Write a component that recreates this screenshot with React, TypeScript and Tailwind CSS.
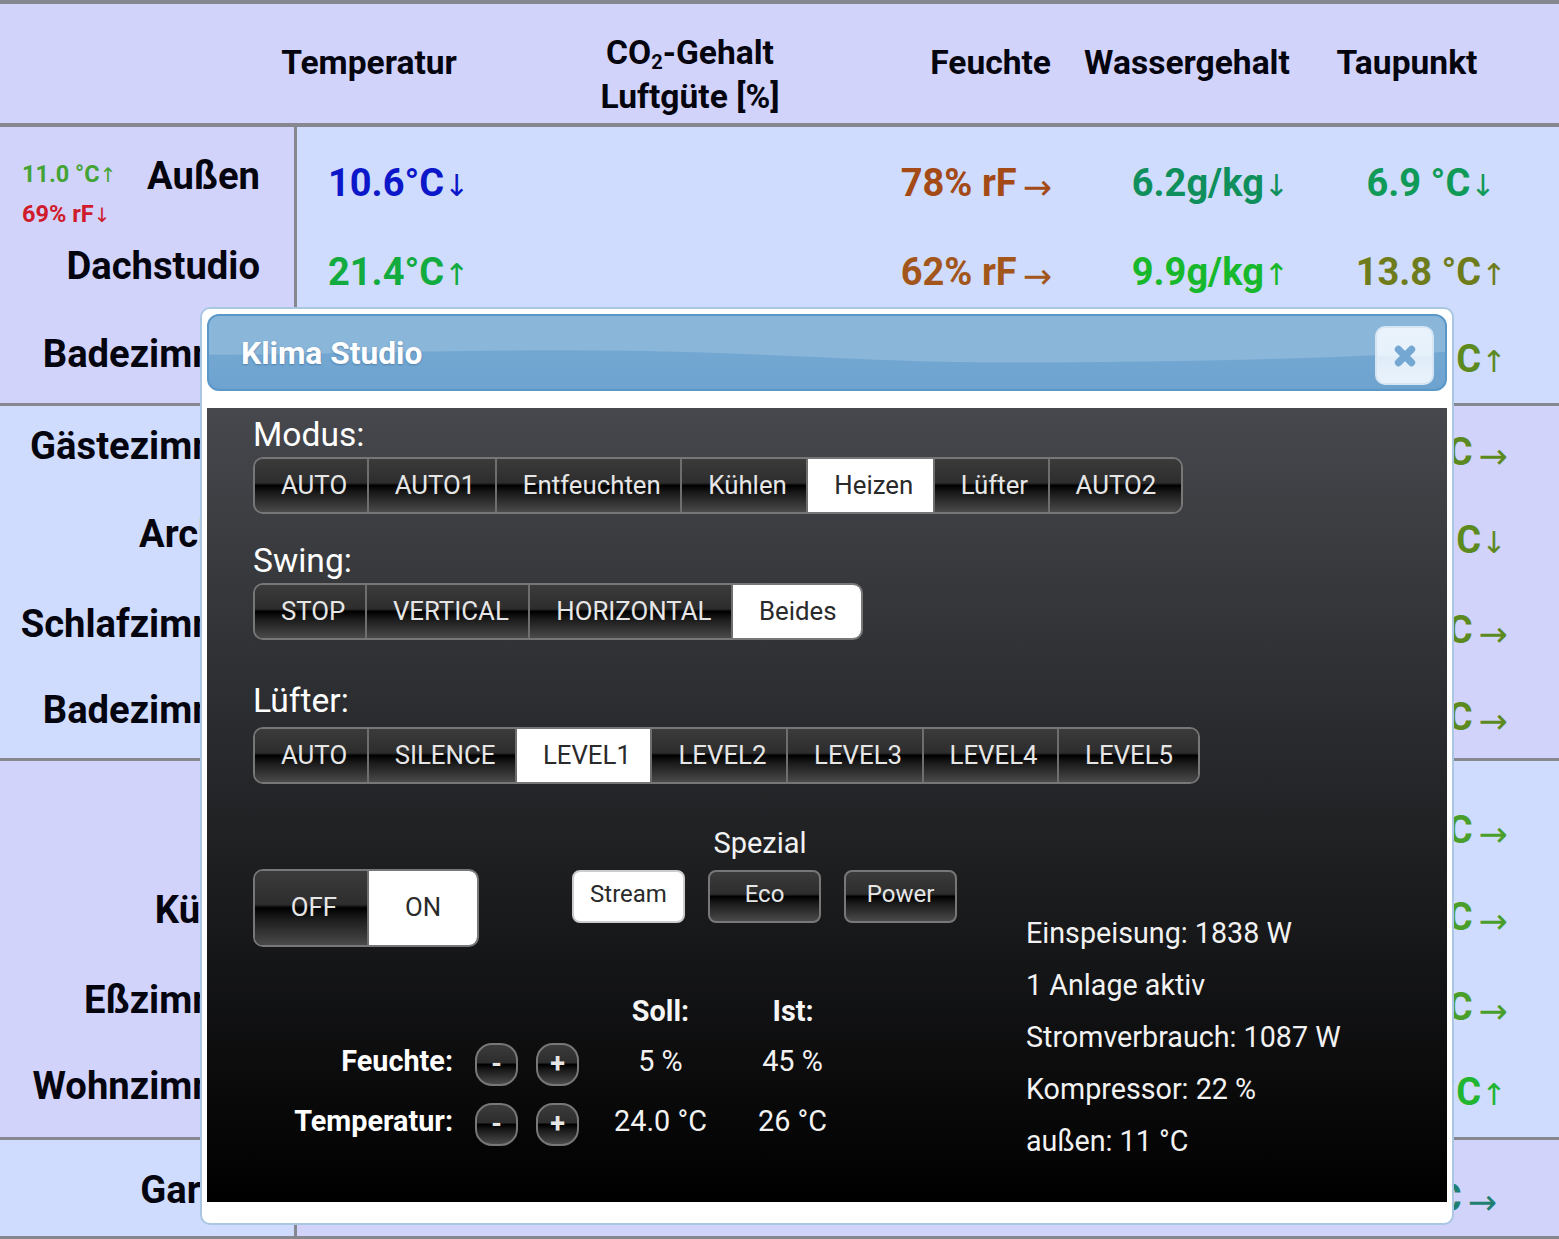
import React from "react";

const F = "font-['Roboto','Noto_Sans','DejaVu_Sans',sans-serif]";
const GLOSS =
  "bg-[linear-gradient(#3b3b3b,#2d2d2d_45%,#000_50%,#1a1a1a_64%,#4a4a4a)] text-[#e6e6e6]";
const ACTIVE = "bg-white text-[#2a2a2a]";

type Val = { t: string; a: string; c: string };

function Value({ v }: { v?: Val }) {
  if (!v) return null;
  return (
    <span className="text-[38px] font-bold leading-[44px] whitespace-nowrap" style={{ color: v.c }}>
      {v.t}
      <span
        className={
          v.a === "→"
            ? "relative top-[3px] text-[35px] font-normal ml-[6px]"
            : "text-[30px] font-normal"
        }
      >
        {v.a}
      </span>
    </span>
  );
}

type RowT = {
  h: number;
  v: number;
  l?: number;
  label?: string;
  shift?: number;
  temp?: Val;
  hum?: Val;
  wat?: Val;
  tau?: Val;
  extra?: boolean;
};

function Row({ r, left, right }: { r: RowT; left: string; right: string }) {
  return (
    <div className={`flex ${r.extra ? "relative z-10" : ""}`} style={{ height: r.h }}>
      <div className={`w-[294px] shrink-0 flex justify-end pr-[34px] relative ${left}`}>
        {r.extra && (
          <div className="mr-auto pl-[22px] pt-[32px] flex flex-col gap-[9px] text-[23.5px] font-bold leading-[30px]">
            <span className="text-[#43a335] whitespace-nowrap">
              11.0 °C<span className="text-[20px] font-normal">↑</span>
            </span>
            <span className="text-[#cf1b2b] whitespace-nowrap">
              69% rF<span className="text-[20px] font-normal">↓</span>
            </span>
          </div>
        )}
        {r.label && (
          <div
            className="text-[38.2px] font-bold leading-[44px] text-[#05050f] whitespace-nowrap"
            style={{ marginTop: (r.l ?? 44) - 22, marginRight: r.shift ?? 0 }}
          >
            {r.label}
          </div>
        )}
      </div>
      <div className="w-[3px] shrink-0 bg-[#87878f]" />
      <div className={`flex-1 flex ${right}`}>
        <div className="w-[263px] pl-[31px] flex" style={{ marginTop: r.v - 22 }}>
          <Value v={r.temp} />
        </div>
        <div className="w-[260px]" />
        <div className="w-[232px] flex justify-end" style={{ marginTop: r.v - 22 }}>
          <Value v={r.hum} />
        </div>
        <div className="w-[237px] flex justify-end" style={{ marginTop: r.v - 22 }}>
          <Value v={r.wat} />
        </div>
        <div
          className={`flex-1 pl-[14px] flex justify-center ${r.tau?.a === "→" ? "pr-[7px]" : ""}`}
          style={{ marginTop: r.v - 22 }}
        >
          <Value v={r.tau} />
        </div>
      </div>
    </div>
  );
}

const OL = "#5c8a1f";
const GR = "#4a9e2a";

const s1: RowT[] = [
  {
    h: 92, v: 56, l: 49, label: "Außen", extra: true,
    temp: { t: "10.6°C", a: "↓", c: "#0b17c8" },
    hum: { t: "78% rF", a: "→", c: "#a34a17" },
    wat: { t: "6.2g/kg", a: "↓", c: "#0f8f5c" },
    tau: { t: "6.9 °C", a: "↓", c: "#0f9a57" },
  },
  {
    h: 90, v: 53, l: 47, label: "Dachstudio",
    temp: { t: "21.4°C", a: "↑", c: "#12ab3f" },
    hum: { t: "62% rF", a: "→", c: "#a3561b" },
    wat: { t: "9.9g/kg", a: "↑", c: "#18b82c" },
    tau: { t: "13.8 °C", a: "↑", c: "#6f7c1c" },
  },
  { h: 94, v: 50, l: 45, label: "Badezimmer", tau: { t: "14.2 °C", a: "↑", c: OL } },
];
const s2: RowT[] = [
  { h: 88, v: 46, l: 40, label: "Gästezimmer", tau: { t: "12.7 °C", a: "→", c: OL } },
  { h: 90, v: 46, l: 40, label: "Archiv", shift: 11, tau: { t: "13.4 °C", a: "↓", c: OL } },
  { h: 88, v: 46, l: 40, label: "Schlafzimmer", tau: { t: "12.1 °C", a: "→", c: OL } },
  { h: 86, v: 45, l: 38, label: "Badezimmer", tau: { t: "12.5 °C", a: "→", c: OL } },
];
const s3: RowT[] = [
  { h: 119, v: 69, tau: { t: "11.8 °C", a: "→", c: GR } },
  { h: 86, v: 37, l: 30, label: "Küche", shift: -2, tau: { t: "11.6 °C", a: "→", c: GR } },
  { h: 86, v: 41, l: 34, label: "Eßzimmer", tau: { t: "11.9 °C", a: "→", c: GR } },
  { h: 85, v: 40, l: 34, label: "Wohnzimmer", tau: { t: "11.5 °C", a: "↑", c: "#22b52f" } },
];
const s4: RowT[] = [{ h: 96, v: 58, l: 50, label: "Garage", shift: -3, tau: { t: "6.6 °C", a: "→", c: "#1f7f70" } }];

const LAV = "bg-[#d2d3fb]";
const BLU = "bg-[#cfdcfd]";

function Section({ rows, left, right }: { rows: RowT[]; left: string; right: string }) {
  return (
    <div className="border-b-[3px] border-[#87878f]">
      {rows.map((r, i) => (
        <Row key={i} r={r} left={left} right={right} />
      ))}
    </div>
  );
}

function Segs({
  items,
  active,
  h = "h-[57px]",
  pads,
}: {
  items: string[];
  active: string;
  h?: string;
  pads?: string[];
}) {
  return (
    <div className={`flex w-fit rounded-[10px] border-2 border-[#777] overflow-hidden ${h}`}>
      {items.map((t, i) => (
        <div
          key={t}
          className={`flex items-center justify-center ${
            pads ? pads[i] : i === items.length - 1 ? "pl-[26px] pr-[25px]" : "pl-[26px] pr-[19.5px]"
          } text-[25.8px] leading-none ${t === active ? ACTIVE : GLOSS} ${
            i > 0 ? "border-l-2 border-[#6e6e6e]" : ""
          }`}
        >
          {t}
        </div>
      ))}
    </div>
  );
}

function Small({ t, on }: { t: string; on?: boolean }) {
  return (
    <div
      className={`w-[113px] h-[53px] rounded-[8px] border-2 flex items-center justify-center pb-[6px] text-[24px] ${
        on ? `${ACTIVE} border-[#ccc]` : `${GLOSS} border-[#777]`
      }`}
    >
      {t}
    </div>
  );
}

function Round({ t }: { t: string }) {
  return (
    <div
      className={`w-[43px] h-[43px] rounded-[17px] border-2 border-[#777] flex items-center justify-center text-[27px] font-bold leading-none ${GLOSS}`}
    >
      {t}
    </div>
  );
}

function Ctl({ label, soll, ist, h }: { label: string; soll: string; ist: string; h: string }) {
  return (
    <div className={`flex items-center text-[28.8px] text-[#f2f2f2] ${h}`}>
      <div className="w-[200px] text-right font-bold text-white pb-[4px]">{label}</div>
      <div className="ml-[22px]"><Round t="-" /></div>
      <div className="ml-[18px]"><Round t="+" /></div>
      <div className="w-[133px] ml-[15px] text-center pb-[4px]">{soll}</div>
      <div className="w-[131px] text-center pb-[4px]">{ist}</div>
    </div>
  );
}

export default function App() {
  return (
    <div className={`${F} relative w-full h-[1239px] overflow-hidden bg-[#d2d3fb]`}>
      <div className={`flex h-[127px] border-t-4 border-b-4 border-[#87878f] ${LAV} text-[33.6px] font-bold text-[#05050f]`}>
        <div className="w-[232px]" />
        <div className="w-[274px] text-center leading-[44px] pt-[37px]">Temperatur</div>
        <div className="w-[368px] text-center leading-[44px] pt-[27px]">
          CO<sub className="text-[20px] leading-none">2</sub>-Gehalt
          <br />
          Luftgüte [%]
        </div>
        <div className="w-[177px] text-right leading-[44px] pt-[37px]">Feuchte</div>
        <div className="ml-[33px] w-[206px] text-center leading-[44px] pt-[37px]">Wassergehalt</div>
        <div className="w-[234px] text-center leading-[44px] pt-[37px]">Taupunkt</div>
      </div>
      <Section rows={s1} left={LAV} right={BLU} />
      <Section rows={s2} left={BLU} right={LAV} />
      <Section rows={s3} left={LAV} right={BLU} />
      <Section rows={s4} left={BLU} right={LAV} />

      <div className="absolute z-20 left-[200px] top-[307px] w-[1254px] h-[918px] bg-white border-2 border-[#a9c7e3] rounded-[10px] p-[5px]">
        <div className="relative h-[77px] rounded-[12px] border-2 border-[#5b97c7] overflow-hidden bg-[linear-gradient(#78acd4,#6ea3d0)] flex items-center">
          <svg className="absolute inset-0 w-full h-full" viewBox="0 0 1240 77" preserveAspectRatio="none">
            <path d="M0 41 C150 40 300 34 440 37 C600 41 680 49 800 49 C950 49 1100 46 1240 38 L1240 0 L0 0 Z" fill="#8ab6d9" />
          </svg>
          <div className="relative ml-[32px] mt-[2px] text-[31.7px] font-bold text-white leading-none [text-shadow:0_1px_2px_rgba(60,100,140,0.6)]">
            Klima Studio
          </div>
          <div className="relative ml-auto mr-[11px] mt-[6px] w-[59px] h-[59px] rounded-[10px] border-2 border-[#d5e5f3] bg-[linear-gradient(#eaf3fc,#e6f1fb_50%,#dfecf8_52%,#eaf3fc)] flex items-center justify-center">
            <svg width="22" height="22" viewBox="0 0 20 20">
              <path d="M4 4 L16 16 M16 4 L4 16" stroke="#74a8d3" strokeWidth="6.5" strokeLinecap="round" />
            </svg>
          </div>
        </div>

        <div className="mt-[17px] h-[794px] pl-[46px] text-white bg-[linear-gradient(#46484d,#000)]">
          <div className="h-[49px] text-[33.6px] leading-[54px]">Modus:</div>
          <Segs items={["AUTO", "AUTO1", "Entfeuchten", "Kühlen", "Heizen", "Lüfter", "AUTO2"]} active="Heizen" />
          <div className="h-[69px] pt-[24px] text-[33.6px] leading-[46px]">Swing:</div>
          <Segs items={["STOP", "VERTICAL", "HORIZONTAL", "Beides"]} active="Beides" />
          <div className="h-[87px] pt-[38px] text-[33.6px] leading-[46px]">Lüfter:</div>
          <Segs items={["AUTO", "SILENCE", "LEVEL1", "LEVEL2", "LEVEL3", "LEVEL4", "LEVEL5"]} active="LEVEL1" />

          <div className="flex">
            <div className="w-[773px]">
              <div className="flex">
                <div className="mt-[85px]">
                  <Segs items={["OFF", "ON"]} active="ON" h="h-[78px]" pads={["w-[112px] pl-[6px]", "w-[110px]"]} />
                </div>
                <div className="ml-[93px] mt-[39px] w-[386px]">
                  <div className="h-[47px] text-[29px] leading-[40px] text-center pr-[10px] text-[#f2f2f2]">Spezial</div>
                  <div className="flex gap-[23px]">
                    <Small t="Stream" on />
                    <Small t="Eco" />
                    <Small t="Power" />
                  </div>
                </div>
              </div>
              <div className="mt-[41px] h-[48px] flex items-center text-[28.8px] font-bold text-[#f5f5f5]">
                <div className="w-[341px]" />
                <div className="w-[133px] text-center">Soll:</div>
                <div className="w-[132px] text-center">Ist:</div>
              </div>
              <Ctl label="Feuchte:" soll="5 %" ist="45 %" h="h-[56px]" />
              <Ctl label="Temperatur:" soll="24.0 °C" ist="26 °C" h="h-[64px]" />
            </div>
            <div className="pt-[123px] text-[28.7px] leading-[52px] text-[#f2f2f2] whitespace-nowrap">
              <div>Einspeisung: 1838 W</div>
              <div>1 Anlage aktiv</div>
              <div>Stromverbrauch: 1087 W</div>
              <div>Kompressor: 22 %</div>
              <div>außen: 11 °C</div>
            </div>
          </div>
        </div>
      </div>
    </div>
  );
}
